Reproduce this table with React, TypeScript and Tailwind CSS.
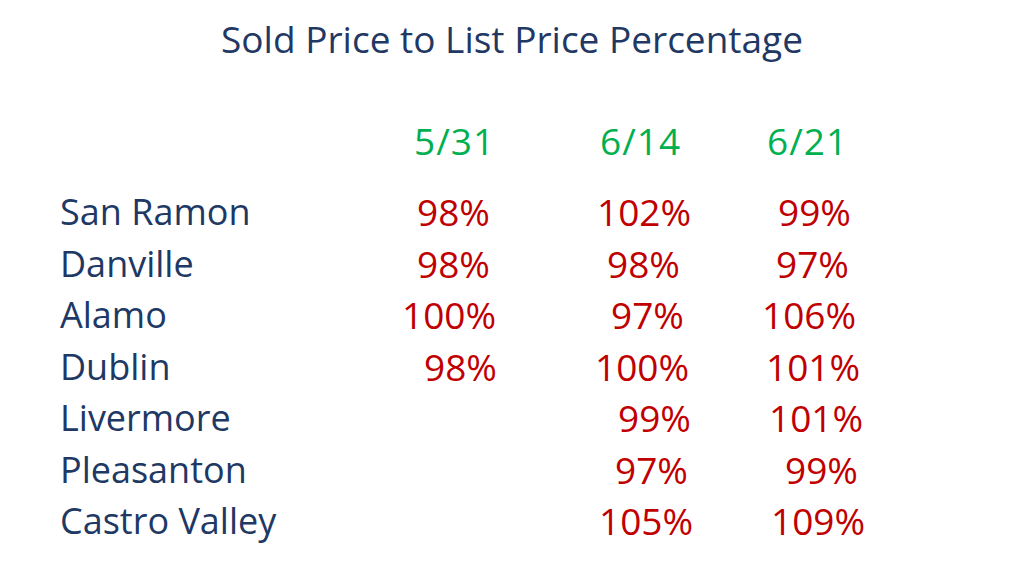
type Cell = { v: string; c: string };

interface Row {
  name: string;
  cells: Cell[];
}

const HEADERS: Cell[] = [
  { v: '5/31', c: 'pl-[14px]' },
  { v: '6/14', c: 'pl-[10px]' },
  { v: '6/21', c: 'pl-[7px]' },
];

const ROWS: Row[] = [
  {
    name: 'San Ramon',
    cells: [
      { v: '98%', c: 'pl-[17px]' },
      { v: '102%', c: 'pl-[7px]' },
      { v: '99%', c: 'pl-[18px]' },
    ],
  },
  {
    name: 'Danville',
    cells: [
      { v: '98%', c: 'pl-[17px]' },
      { v: '98%', c: 'pl-[17px]' },
      { v: '97%', c: 'pl-[16px]' },
    ],
  },
  {
    name: 'Alamo',
    cells: [
      { v: '100%', c: 'pl-[2px]' },
      { v: '97%', c: 'pl-[21px]' },
      { v: '106%', c: 'pl-[2px]' },
    ],
  },
  {
    name: 'Dublin',
    cells: [
      { v: '98%', c: 'pl-[24px]' },
      { v: '100%', c: 'pl-[5px]' },
      { v: '101%', c: 'pl-[6px]' },
    ],
  },
  {
    name: 'Livermore',
    cells: [
      { v: '', c: '' },
      { v: '99%', c: 'pl-[28px]' },
      { v: '101%', c: 'pl-[9px]' },
    ],
  },
  {
    name: 'Pleasanton',
    cells: [
      { v: '', c: '' },
      { v: '97%', c: 'pl-[25px]' },
      { v: '99%', c: 'pl-[25px]' },
    ],
  },
  {
    name: 'Castro Valley',
    cells: [
      { v: '', c: '' },
      { v: '105%', c: 'pl-[9px]' },
      { v: '109%', c: 'pl-[11px]' },
    ],
  },
];

const colWidths = ['w-[190px]', 'w-[170px]', 'w-[170px]'];

const App = () => {
  return (
    <div
      className="w-[1024px] h-[576px] bg-white overflow-hidden flex flex-col"
      style={{ fontFamily: '"Open Sans", "Liberation Sans", sans-serif' }}
    >
      {/* Title */}
      <div className="mt-[13px] h-[51px] leading-[51px] text-center text-[37px] text-[#1f3864]">
        Sold Price to List Price Percentage
      </div>

      {/* Column headers */}
      <div className="mt-[51px] h-[51px] leading-[51px] flex pl-[400px] text-[37px] tracking-[1px] text-[#00b050]">
        {HEADERS.map((h, i) => (
          <div key={h.v} className={`${colWidths[i]} ${h.c}`}>
            {h.v}
          </div>
        ))}
      </div>

      {/* Data rows */}
      <div className="mt-[20px] flex flex-col">
        {ROWS.map((row) => (
          <div key={row.name} className="h-[51.5px] leading-[51.5px] flex">
            <div className="w-[400px] pl-[60px] text-[36px] text-[#203864]">{row.name}</div>
            {row.cells.map((cell, i) => (
              <div key={i} className={`${colWidths[i]} ${cell.c} text-[37px] text-[#c00000]`}>
                {cell.v}
              </div>
            ))}
          </div>
        ))}
      </div>
    </div>
  );
};

export default App;
